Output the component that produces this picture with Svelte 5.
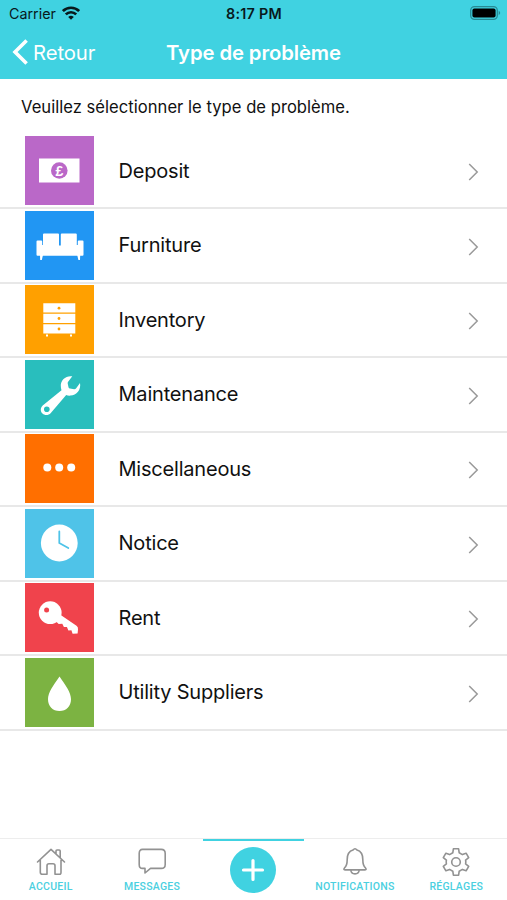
<script lang="ts">
    const problemTypes = [
        { id: 'deposit', label: 'Deposit', color: '#ba68c8' },
        { id: 'furniture', label: 'Furniture', color: '#2196f3' },
        { id: 'inventory', label: 'Inventory', color: '#ffa000' },
        { id: 'maintenance', label: 'Maintenance', color: '#29bebd' },
        { id: 'misc', label: 'Miscellaneous', color: '#ff6f00' },
        { id: 'notice', label: 'Notice', color: '#4fc3e8' },
        { id: 'rent', label: 'Rent', color: '#f0434c' },
        { id: 'utility', label: 'Utility Suppliers', color: '#7cb342' }
    ];
</script>

<div class="screen">
    <header>
        <div class="status-bar">
            <div class="carrier">
                <span>Carrier</span>
                <svg width="18" height="14" viewBox="0 0 18 14" fill="none" stroke="#08191c" stroke-width="2.7">
                    <path d="M.9 5.1a11.5 11.5 0 0 1 16.2 0" />
                    <path d="M3.8 8.4a7.4 7.4 0 0 1 10.4 0" />
                    <path d="M9 13.8 6.2 11a4 4 0 0 1 5.6 0z" fill="#08191c" stroke="none" />
                </svg>
            </div>
            <span class="time">8:17 PM</span>
            <svg class="battery" width="31" height="14" viewBox="0 0 31 14">
                <rect x=".7" y=".7" width="26.6" height="12.6" rx="3.8" fill="none" stroke="#278a94" stroke-width="1.3" />
                <rect x="2.4" y="2.4" width="23.2" height="9.2" rx="2" fill="#000" />
                <path d="M28.7 4.8q3 2.2 0 4.4z" fill="#278a94" />
            </svg>
        </div>
        <nav class="nav-bar">
            <a href="#retour" class="back">
                <svg width="17" height="26" viewBox="0 0 17 26" fill="none" stroke="#fff" stroke-width="3.6">
                    <path d="M14.6 1.5 3 13l11.6 11.5" />
                </svg>
                <span>Retour</span>
            </a>
            <h1>Type de problème</h1>
        </nav>
    </header>

    <main>
        <p>Veuillez sélectionner le type de problème.</p>
        <ul>
            {#each problemTypes as type}
                <li>
                    <svg class="tile" style="background: {type.color}" viewBox="0 0 69 69" fill="#fff">
                        {#if type.id === 'deposit'}
                            <path d="M14 22.5h40.5v24H14z" />
                            <circle cx="34.3" cy="34.5" r="8.3" fill={type.color} />
                            <text x="34.4" y="39.7" text-anchor="middle">£</text>
                        {:else if type.id === 'furniture'}
                            <path d="M19 22.5h14q1 0 1 1v11h1.8v-11q0-1 1-1h14q1 0 1 1V34h1v-3.5q0-1 1-1h3.7q1 0 1 1v13.2q0 1-1 1h-45q-1 0-1-1V30.5q0-1 1-1h3.7q1 0 1 1V34h.8V23.5q0-1 1-1z" />
                            <path d="M15 44h3l-1.2 5h-1.6zM52.2 44h3l-.2 5h-1.6z" />
                        {:else if type.id === 'inventory'}
                            <path d="M18.3 18.3h32v9.2h-32zM18.3 28.8h32v9.2h-32zM18.3 39.2h32v9.2h-32zM21 49.5h2v2h-2zM45 49.5h2v2h-2z" />
                            <g fill={type.color}>
                                <circle cx="34" cy="23.2" r="1.4" />
                                <circle cx="34" cy="33.5" r="1.4" />
                                <circle cx="34" cy="44" r="1.4" />
                            </g>
                        {:else if type.id === 'maintenance'}
                            <path d="M47.3 16.3C41 15.3 35.6 20 35.8 25.8q0 2.6.7 4.4L17.7 45.4c-2.5 2.2-2.5 5.9-.2 8.2 2.3 2.2 6.2 1.9 8.3-.7l15.4-17.8q1.8.7 4.2.5C51.5 35.2 56.3 30 55 23l-3.8 5.2q-.7 1-2 1l-4.2-.6q-1.2-.2-1.5-1.4l-.8-3.8q-.2-1.3.8-2.2z" />
                            <circle cx="21.8" cy="49.3" r="2.8" fill={type.color} />
                        {:else if type.id === 'misc'}
                            <circle cx="22.3" cy="33.5" r="4" />
                            <circle cx="34.2" cy="33.5" r="4" />
                            <circle cx="46.2" cy="33.5" r="4" />
                        {:else if type.id === 'notice'}
                            <circle cx="34.3" cy="34" r="18.4" />
                            <path d="M34.3 22.5V34l9 5" fill="none" stroke={type.color} stroke-width="1.8" stroke-linecap="round" />
                        {:else if type.id === 'rent'}
                            <circle cx="25.2" cy="29.7" r="11.4" />
                            <path d="M35 31.5 51.5 42.7q1.8 1.3 1.5 3.8l-.4 4-5 .2-1.2-3.4-3 .2-1.5-3.6-3 .1-1.6-3.3-3.6.2-3.7-3.4z" />
                            <circle cx="21.6" cy="27" r="2.5" fill={type.color} />
                        {:else}
                            <path d="M34.5 18.5C40.5 27 46 34.5 46 41.3 46 48.5 41.3 53 34.5 53S23 48.5 23 41.3c0-6.8 5.5-14.3 11.5-22.8z" />
                        {/if}
                    </svg>
                    <span class="label">{type.label}</span>
                    <svg class="chevron" width="11" height="18" viewBox="0 0 11 18" fill="none" stroke="#999" stroke-width="1.5">
                        <path d="m1.2 1 8 8-8 8" />
                    </svg>
                </li>
            {/each}
        </ul>
    </main>

    <footer>
        <a href="#accueil" class="tab">
            <svg width="30" height="28" viewBox="0 0 30 28">
                <path d="M4.3 12.3v12q0 2 2 2H11v-8.5q0-2 2-2h4q2 0 2 2v8.5h4.7q1.3 0 1.3-2v-12M1.5 14 15 1.3 28.5 14M20 5.6V3q0-1 1-1h2.2q1 0 1 1v6.7" />
            </svg>
            <span>ACCUEIL</span>
        </a>
        <a href="#messages" class="tab">
            <svg width="30" height="28" viewBox="0 0 30 28">
                <path d="M5.5 1.4h18.7q4 0 4 4v11q0 4-4 4H13.5L8 25v-4.6H5.5q-3.3 0-3.3-4v-11q0-4 3.3-4z" />
            </svg>
            <span>MESSAGES</span>
        </a>
        <a href="#nouveau" class="tab active" aria-label="Nouveau problème">
            <svg class="plus" width="46" height="46" viewBox="0 0 46 46">
                <circle cx="23" cy="23" r="23" />
                <path d="M23 13.5v19M13.5 23h19" />
            </svg>
        </a>
        <a href="#notifications" class="tab">
            <svg width="30" height="28" viewBox="0 0 30 28">
                <path d="M13 2.1q2-2.6 4 0c4.8 1.4 5.8 5 5.8 9.4 0 5 .5 6.7 2.7 8.4 1 1.2.8 2-.5 2H5c-1.3 0-1.5-.8-.5-2 2.2-1.7 2.7-3.4 2.7-8.4 0-4.4 1-8 5.8-9.4zM10.8 22c.4 5.2 8 5.2 8.4 0" />
            </svg>
            <span>NOTIFICATIONS</span>
        </a>
        <a href="#reglages" class="tab">
            <svg width="30" height="28" viewBox="0 0 30 28">
                <path d="M12.4.8h5.2l.6 4 3.2 1.8 3.7-1.4 2.6 4.5-3.1 2.5q.4 1.8 0 3.6l3.1 2.5-2.6 4.5-3.7-1.4-3.2 1.8-.6 4h-5.2l-.6-4-3.2-1.8-3.7 1.4-2.6-4.5 3.1-2.5q-.4-1.8 0-3.6L2.3 9.7l2.6-4.5 3.7 1.4 3.2-1.8z" />
                <circle cx="15" cy="14" r="4.3" />
            </svg>
            <span>RÉGLAGES</span>
        </a>
    </footer>
</div>

<style>
    :global(body) {
        background: #fff;
    }

    .screen {
        display: flex;
        flex-direction: column;
        height: 900px;
        font-family: Inter, "Liberation Sans", sans-serif;
        color: #111;
    }

    a {
        text-decoration: none;
    }

    header {
        height: 79px;
        background: #40d2e1;
    }

    .status-bar {
        display: grid;
        grid-template-columns: 1fr auto 1fr;
        align-items: center;
        height: 27px;
        padding: 0 6px 0 9px;
        color: #08191c;
    }

    .carrier {
        display: flex;
        align-items: center;
        gap: 6px;
        font-size: 14.3px;
    }

    .carrier svg {
        margin-top: -2px;
    }

    .time {
        margin-left: -2px;
        font-size: 14.3px;
        font-weight: 600;
        letter-spacing: 0.3px;
    }

    .battery {
        justify-self: end;
        margin-top: -1px;
    }

    .nav-bar {
        display: grid;
        grid-template-columns: 1fr auto 1fr;
        align-items: center;
        height: 50px;
        padding: 0 12px;
        color: #fff;
    }

    .back {
        display: flex;
        align-items: center;
        gap: 4px;
        color: #fff;
        font-size: 20.3px;
        letter-spacing: -0.1px;
    }

    h1 {
        margin: 0;
        font-size: 20.3px;
        font-weight: 600;
        letter-spacing: -0.1px;
    }

    main {
        flex: 1;
    }

    p {
        margin: 0;
        padding: 18px 21px 0;
        height: 37.5px;
        font-size: 16.6px;
        line-height: 21px;
        letter-spacing: 0.02px;
    }

    ul {
        margin: 0;
        padding: 0;
        list-style: none;
    }

    li {
        display: flex;
        align-items: center;
        box-sizing: border-box;
        height: 74.52px;
        padding: 0 28px 0 25px;
        border-bottom: 2px solid #e8e8e8;
    }

    .tile {
        width: 69px;
        height: 69px;
    }

    .tile text {
        font: 700 14px "Liberation Sans", sans-serif;
    }

    .label {
        flex: 1;
        margin-left: 24.5px;
        font-size: 20px;
        letter-spacing: -0.2px;
    }

    .chevron {
        margin-top: 3px;
    }

    footer {
        display: grid;
        grid-template-columns: repeat(5, 1fr);
        height: 61px;
        border-top: 1px solid #ededed;
    }

    .tab {
        display: flex;
        flex-direction: column;
        align-items: center;
        padding-top: 9px;
        color: #4bd0df;
        font: 500 10.5px/13px Roboto, sans-serif;
        letter-spacing: 0.25px;
    }

    .tab svg {
        fill: none;
        stroke: #929292;
        stroke-width: 1.6;
        stroke-linejoin: round;
        stroke-linecap: round;
    }

    .tab span {
        margin-top: 4px;
    }

    .tab.active {
        padding-top: 6px;
        border-top: 2px solid #40d2e1;
    }

    .tab .plus {
        fill: #40d2e1;
        stroke: none;
    }

    .plus path {
        stroke: #fff;
        stroke-width: 3.2;
    }
</style>
